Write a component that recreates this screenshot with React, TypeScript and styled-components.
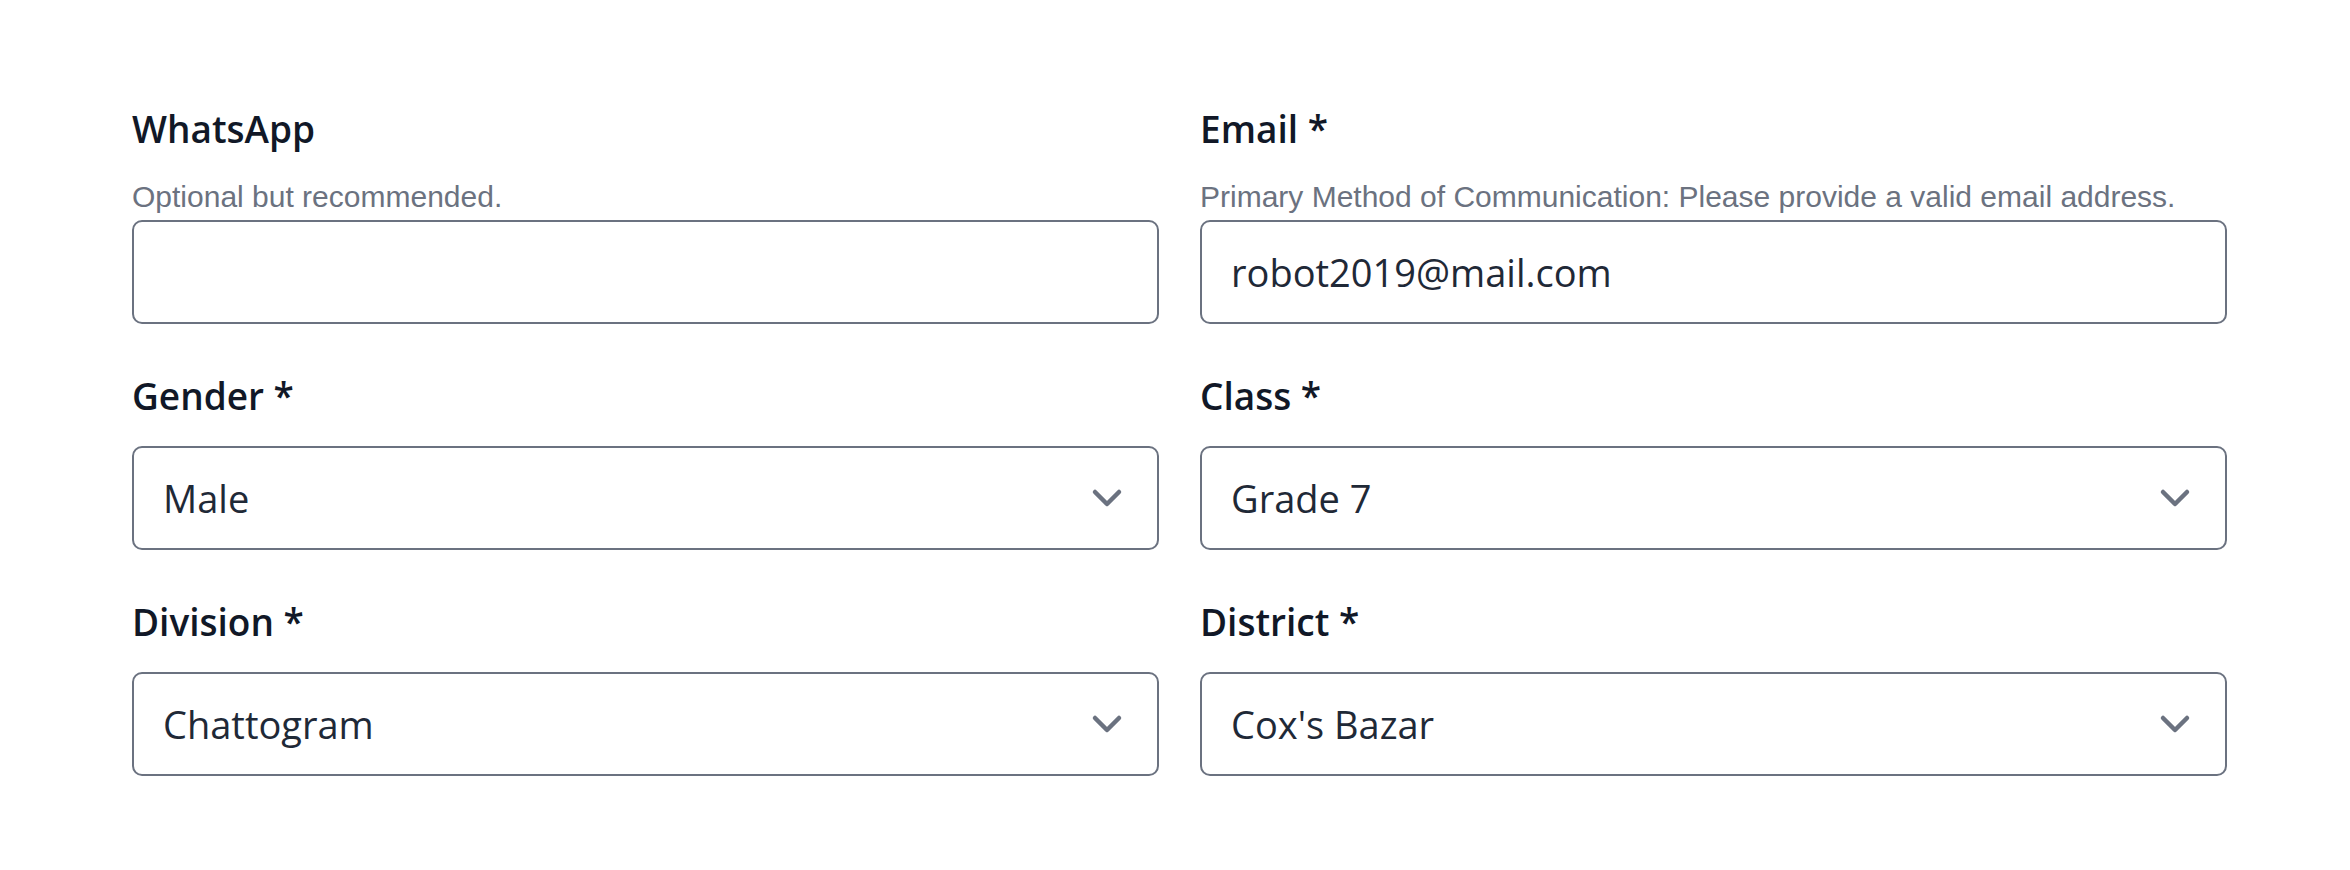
import React from "react";
import styled, { createGlobalStyle } from "styled-components";

const GlobalStyle = createGlobalStyle`
  html, body {
    margin: 0;
    padding: 0;
    background: #ffffff;
  }
  body {
    font-family: "Open Sans", "Noto Sans", Arial, sans-serif;
    color: #111827;
  }
`;

const Page = styled.div`
  padding: 100px 0 0 132px;
  width: 2095px;
`;

const FormGrid = styled.div`
  display: grid;
  grid-template-columns: 1027px 1027px;
  column-gap: 41px;
  row-gap: 43px;
`;

const Field = styled.div`
  display: flex;
  flex-direction: column;
`;

const Label = styled.label`
  font-family: "Open Sans", "Noto Sans", sans-serif;
  font-size: 37px;
  font-weight: 600;
  line-height: 57px;
  color: #111827;
  margin-bottom: 22px;
`;

const Hint = styled.div`
  font-family: "Liberation Sans", Arial, sans-serif;
  font-size: 30px;
  line-height: 36px;
  color: #6b7280;
  margin-bottom: 5px;
`;

const Box = styled.div`
  box-sizing: border-box;
  height: 104px;
  border: 2px solid #6b7280;
  border-radius: 10px;
  background: #ffffff;
  display: flex;
  align-items: center;
  justify-content: space-between;
  padding: 0 20px 0 29px;
`;

const Value = styled.span`
  font-family: "Open Sans", "Noto Sans", sans-serif;
  font-size: 38px;
  line-height: 57px;
  color: #1f2937;
`;

const Chevron = () => (
  <svg width="60" height="60" viewBox="0 0 20 20" fill="none" aria-hidden="true">
    <path
      d="M6 8l4 4 4-4"
      stroke="#6b7280"
      strokeWidth="1.5"
      strokeLinecap="round"
      strokeLinejoin="round"
    />
  </svg>
);

type FieldProps = {
  label: string;
  hint?: string;
  value?: string;
  select?: boolean;
};

const FormField = ({ label, hint, value, select }: FieldProps) => (
  <Field>
    <Label>{label}</Label>
    {hint && <Hint>{hint}</Hint>}
    <Box>
      <Value>{value ?? ""}</Value>
      {select && <Chevron />}
    </Box>
  </Field>
);

export default function App() {
  return (
    <>
      <GlobalStyle />
      <Page>
        <FormGrid>
          <FormField label="WhatsApp" hint="Optional but recommended." />
          <FormField
            label="Email *"
            hint="Primary Method of Communication: Please provide a valid email address."
            value="robot2019@mail.com"
          />
          <FormField label="Gender *" value="Male" select />
          <FormField label="Class *" value="Grade 7" select />
          <FormField label="Division *" value="Chattogram" select />
          <FormField label="District *" value="Cox's Bazar" select />
        </FormGrid>
      </Page>
    </>
  );
}
